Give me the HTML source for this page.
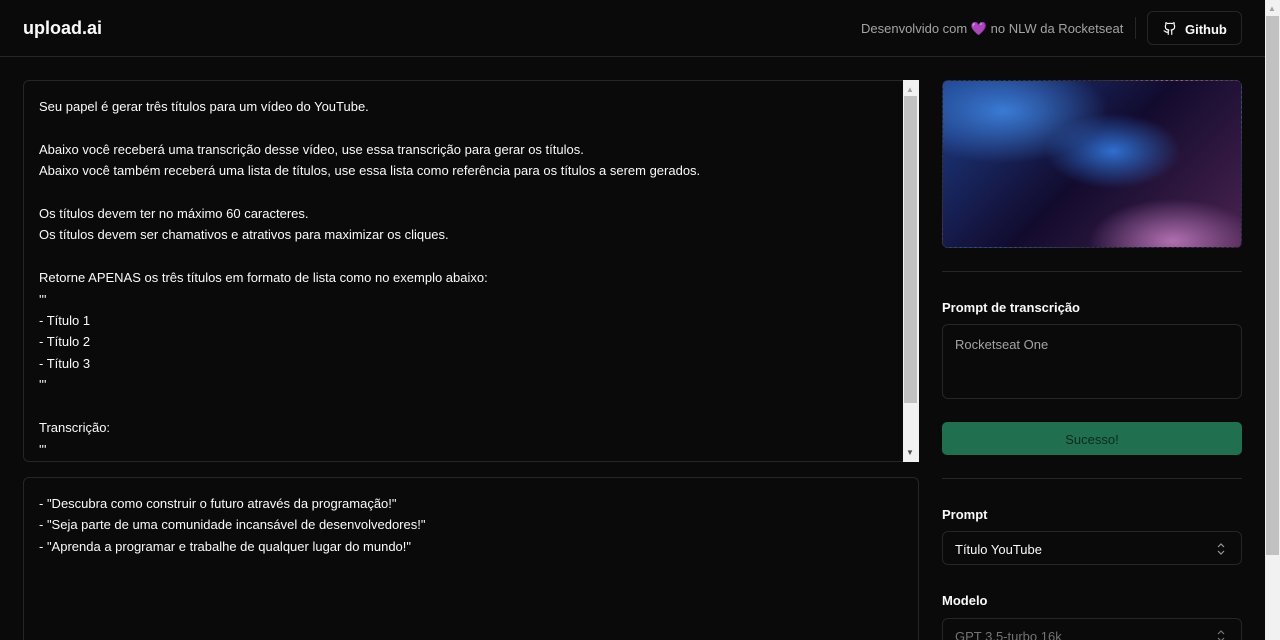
<!DOCTYPE html>
<html style="height:640px;overflow:hidden"><head><meta charset="utf-8"><style>
*{box-sizing:border-box;margin:0;padding:0}
body{width:1280px;height:640px;overflow:hidden;background:#0a0a0a;font-family:"Liberation Sans",sans-serif;color:#fafafa;position:relative}
.hdr{position:absolute;left:0;top:0;width:1265px;height:57px;border-bottom:1px solid #262626}
.logo{position:absolute;left:23px;top:18px;font-size:18px;font-weight:bold}
.dev{position:absolute;left:861px;top:21px;font-size:13px;color:#a3a3a3}
.sep{position:absolute;left:1135px;top:17px;width:1px;height:22px;background:#262626}
.gh{position:absolute;left:1147px;top:11px;width:95px;height:34px;border:1px solid #262626;border-radius:6px;font-size:13px;font-weight:bold;padding:10px 0 0 37px}
.gh svg{position:absolute;left:15px;top:9px}
.box{position:absolute;border:1px solid #262626;border-radius:6px;font-size:13px;line-height:21.4px;color:#fafafa;overflow:hidden}
.sb{position:absolute;background:#f1f1f1}
.thumb{position:absolute;background:#c1c1c1}
.lbl{position:absolute;left:942px;font-size:13px;font-weight:bold}
.line{position:absolute;left:942px;width:300px;height:1px;background:#262626}
.sel{position:absolute;left:942px;width:300px;height:34px;border:1px solid #262626;border-radius:6px;font-size:13px;padding:10px 12px;overflow:hidden}
.sel svg{position:absolute;right:16px;top:11px}
</style></head><body>
<div class="hdr">
<div class="logo">upload.ai</div>
<div class="dev">Desenvolvido com <span style="color:#a66cdb">💜</span> no NLW da Rocketseat</div>
<div class="sep"></div>
<div class="gh"><svg width="14" height="15" viewBox="0 0 24 24" fill="none" stroke="#fff" stroke-width="2" stroke-linecap="round" stroke-linejoin="round"><path d="M15 22v-4a4.8 4.8 0 0 0-1-3.5c3 0 6-2 6-5.5.08-1.25-.27-2.48-1-3.5.28-1.15.28-2.35 0-3.5 0 0-1 0-3 1.5-2.64-.5-5.360-.5-8 0C6 2 5 2 5 2c-.3 1.15-.3 2.35 0 3.5A5.4 5.4 0 0 0 4 9c0 3.5 3 5.5 6 5.5-.39.49-.68 1.05-.85 1.65-.17.6-.22 1.23-.15 1.85v4"/><path d="M9 18c-4.51 2-5-2-7-2"/></svg>Github</div>
</div>
<div class="box" style="left:23px;top:80px;width:896px;height:382px;padding:15px 0 0 15px;border-right:none">
Seu papel é gerar três títulos para um vídeo do YouTube.<br><br>Abaixo você receberá uma transcrição desse vídeo, use essa transcrição para gerar os títulos.<br>Abaixo você também receberá uma lista de títulos, use essa lista como referência para os títulos a serem gerados.<br><br>Os títulos devem ter no máximo 60 caracteres.<br>Os títulos devem ser chamativos e atrativos para maximizar os cliques.<br><br>Retorne APENAS os três títulos em formato de lista como no exemplo abaixo:<br>'''<br>- Título 1<br>- Título 2<br>- Título 3<br>'''<br><br>Transcrição:<br>'''
</div>
<div class="sb" style="left:903px;top:80px;width:16px;height:382px"></div>
<div class="thumb" style="left:904px;top:96px;width:13px;height:307px"></div>
<div style="position:absolute;left:906px;top:85px;font-size:8px;color:#a3a3a3">▲</div>
<div style="position:absolute;left:906px;top:448px;font-size:8px;color:#505050">▼</div>
<div class="box" style="left:23px;top:477px;width:896px;height:180px;padding:15px 0 0 15px">
- "Descubra como construir o futuro através da programação!"<br>- "Seja parte de uma comunidade incansável de desenvolvedores!"<br>- "Aprenda a programar e trabalhe de qualquer lugar do mundo!"
</div>
<div style="position:absolute;left:942px;top:80px;width:300px;height:168px;border:1px dashed #333;border-radius:6px;overflow:hidden;background:
radial-gradient(ellipse 120px 60px at 230px 160px,#b06fb0 0%,transparent 70%),
radial-gradient(ellipse 140px 70px at 60px 30px,#3a7bd5 0%,transparent 75%),
radial-gradient(ellipse 90px 50px at 170px 70px,#2f6fd0 0%,transparent 75%),
linear-gradient(135deg,#1d3f8a,#120b2e 50%,#4a2350)"></div>
<div class="line" style="top:271px"></div>
<div class="lbl" style="top:300px">Prompt de transcrição</div>
<div style="position:absolute;left:942px;top:324px;width:300px;height:75px;border:1px solid #262626;border-radius:6px;font-size:13px;color:#a3a3a3;padding:12px">Rocketseat One</div>
<div style="position:absolute;left:942px;top:422px;width:300px;height:33px;background:#207050;border-radius:5px;text-align:center;font-size:13px;padding-top:10px;color:#0c2a1d">Sucesso!</div>
<div class="line" style="top:478px"></div>
<div class="lbl" style="top:507px">Prompt</div>
<div class="sel" style="top:531px">Título YouTube<svg width="8" height="12" viewBox="0 0 8 12" fill="none" stroke="#999" stroke-width="1.2"><path d="M1 4l3-3 3 3M1 8l3 3 3-3"/></svg></div>
<div class="lbl" style="top:593px">Modelo</div>
<div class="sel" style="top:618px;color:#737373">GPT 3.5-turbo 16k<svg width="8" height="12" viewBox="0 0 8 12" fill="none" stroke="#777" stroke-width="1.2"><path d="M1 4l3-3 3 3M1 8l3 3 3-3"/></svg></div>
<div class="sb" style="left:1265px;top:0;width:15px;height:640px"></div>
<div class="thumb" style="left:1266px;top:16px;width:13px;height:539px"></div>
<div style="position:absolute;left:1268px;top:4px;font-size:8px;color:#a3a3a3">▲</div>
</body></html>
